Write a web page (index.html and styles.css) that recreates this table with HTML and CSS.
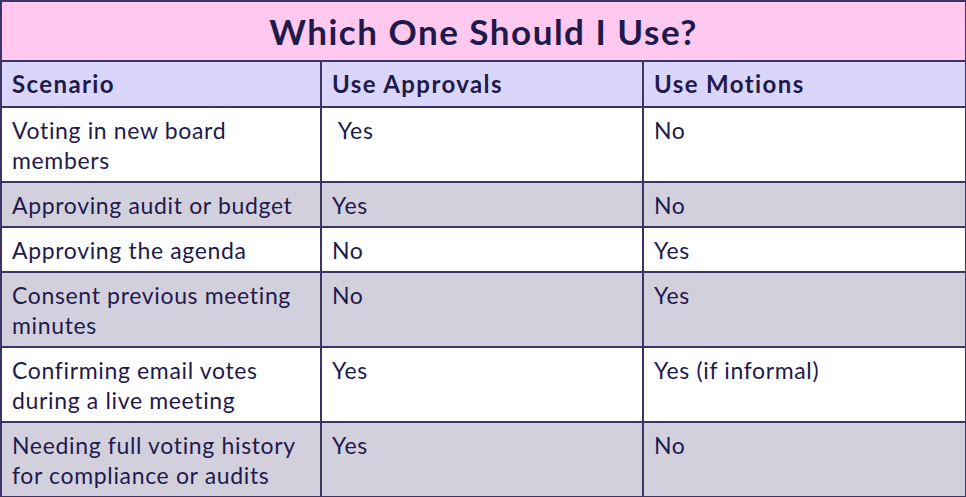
FILE: index.html
```html
<!DOCTYPE html>
<html>
<head>
<meta charset="utf-8">
<link rel="stylesheet" href="styles.css">
</head>
<body>
<table class="grid">
  <colgroup>
    <col class="c1"><col class="c2"><col class="c3">
  </colgroup>
  <tr class="title-row"><th colspan="3">Which One Should I Use?</th></tr>
  <tr class="head-row"><th>Scenario</th><th>Use Approvals</th><th>Use Motions</th></tr>
  <tr class="white tall"><td>Voting in new board members</td><td>&nbsp;Yes</td><td>No</td></tr>
  <tr class="grey short"><td>Approving audit or budget</td><td>Yes</td><td>No</td></tr>
  <tr class="white short"><td>Approving the agenda</td><td>No</td><td>Yes</td></tr>
  <tr class="grey tall"><td>Consent previous meeting minutes</td><td>No</td><td>Yes</td></tr>
  <tr class="white tall"><td>Confirming email votes during a live meeting</td><td>Yes</td><td>Yes (if informal)</td></tr>
  <tr class="grey tall"><td>Needing full voting history for compliance or audits</td><td>Yes</td><td>No</td></tr>
</table>
</body>
</html>
```

FILE: styles.css
```css
html, body {
  margin: 0;
  padding: 0;
  background: #ffffff;
}
.grid {
  border-collapse: collapse;
  width: 965px;
  table-layout: fixed;
  font-family: "Lato", "Open Sans", sans-serif;
  color: #1f1a4c;
  border: 2px solid #3b3464;
}
.c1 { width: 320px; }
.c2 { width: 322px; }
.c3 { width: 323px; }
.grid th, .grid td {
  border: 2px solid #3b3464;
  text-align: left;
  padding: 0 10px;
}
.title-row th {
  background: #ffc8ee;
  text-align: center;
  font-size: 35px;
  letter-spacing: 1.5px;
  font-weight: 700;
  height: 58px;
  padding: 0;
  line-height: 58px;
}
.head-row th {
  background: #dad5fb;
  font-size: 24px;
  letter-spacing: 1.4px;
  font-weight: 700;
  height: 44px;
  line-height: 28px;
  vertical-align: middle;
}
.grid td {
  font-size: 23px;
  letter-spacing: 0.65px;
  line-height: 30px;
  vertical-align: top;
  padding-top: 7px;
  padding-bottom: 6px;
}
.white td { background: #ffffff; }
.grey td { background: #d3d0dd; }
.short td { height: 29px; }
.tall td { height: 60px; }
```
